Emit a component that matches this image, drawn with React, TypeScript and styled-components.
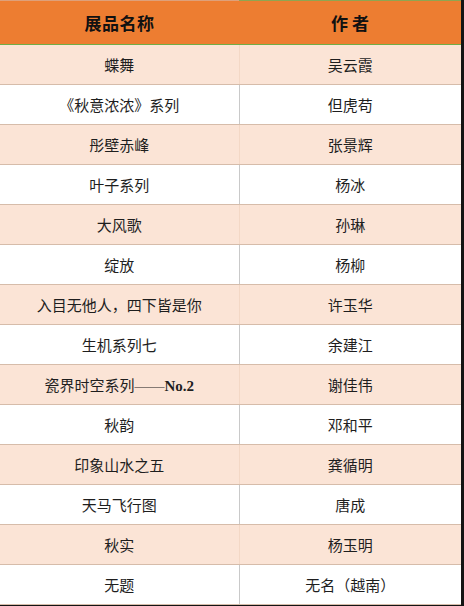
import styled, { createGlobalStyle } from 'styled-components';

interface Exhibit {
  title: React.ReactNode;
  author: string;
}

const exhibits: Exhibit[] = [
  { title: '蝶舞', author: '吴云霞' },
  { title: '《秋意浓浓》系列', author: '但虎苟' },
  { title: '彤壁赤峰', author: '张景辉' },
  { title: '叶子系列', author: '杨冰' },
  { title: '大风歌', author: '孙琳' },
  { title: '绽放', author: '杨柳' },
  { title: '入目无他人，四下皆是你', author: '许玉华' },
  { title: '生机系列七', author: '余建江' },
  { title: <>瓷界时空系列——<b>No.2</b></>, author: '谢佳伟' },
  { title: '秋韵', author: '邓和平' },
  { title: '印象山水之五', author: '龚循明' },
  { title: '天马飞行图', author: '唐成' },
  { title: '秋实', author: '杨玉明' },
  { title: '无题', author: '无名（越南）' },
];

const GlobalStyle = createGlobalStyle`
  html, body {
    margin: 0;
    padding: 0;
    background: #141414;
  }
  body {
    font-family: "Liberation Serif", "Noto Sans CJK SC", serif;
  }
`;

const Table = styled.table`
  width: 461px;
  border-collapse: collapse;
  table-layout: fixed;
  background: #ffffff;
`;

const HeadCell = styled.th<{ $right?: boolean }>`
  height: 43px;
  padding: 0;
  background: #ed7d31;
  border-top: 1px solid ${p => (p.$right ? '#8fa552' : '#dea07a')};
  border-bottom: 1px solid #70ad47;
  color: #111;
  font-size: 17px;
  font-weight: 700;
  text-align: center;
  vertical-align: middle;
  letter-spacing: ${p => (p.$right ? '0' : '0.5px')};
`;

const Row = styled.tr<{ $shaded: boolean }>`
  background: ${p => (p.$shaded ? '#fbe4d6' : '#ffffff')};
`;

const Cell = styled.td<{ $shaded: boolean; $first?: boolean }>`
  height: 39px;
  padding: 0;
  border-bottom: 1px solid #d6bcaa;
  border-right: ${p =>
    p.$first ? `1px solid ${p.$shaded ? '#f3d8c6' : '#c9c9c9'}` : 'none'};
  color: #1e1e1e;
  font-size: 15px;
  text-align: center;
  vertical-align: middle;
  white-space: nowrap;

  b {
    font-weight: 700;
  }
`;

export default function App() {
  return (
    <>
      <GlobalStyle />
      <Table>
        <colgroup>
          <col style={{ width: 239 }} />
          <col />
        </colgroup>
        <thead>
          <tr>
            <HeadCell>展品名称</HeadCell>
            <HeadCell $right>作 者</HeadCell>
          </tr>
        </thead>
        <tbody>
          {exhibits.map((item, i) => {
            const shaded = i % 2 === 0;
            return (
              <Row key={i} $shaded={shaded}>
                <Cell $shaded={shaded} $first>
                  {item.title}
                </Cell>
                <Cell $shaded={shaded}>{item.author}</Cell>
              </Row>
            );
          })}
        </tbody>
      </Table>
    </>
  );
}
